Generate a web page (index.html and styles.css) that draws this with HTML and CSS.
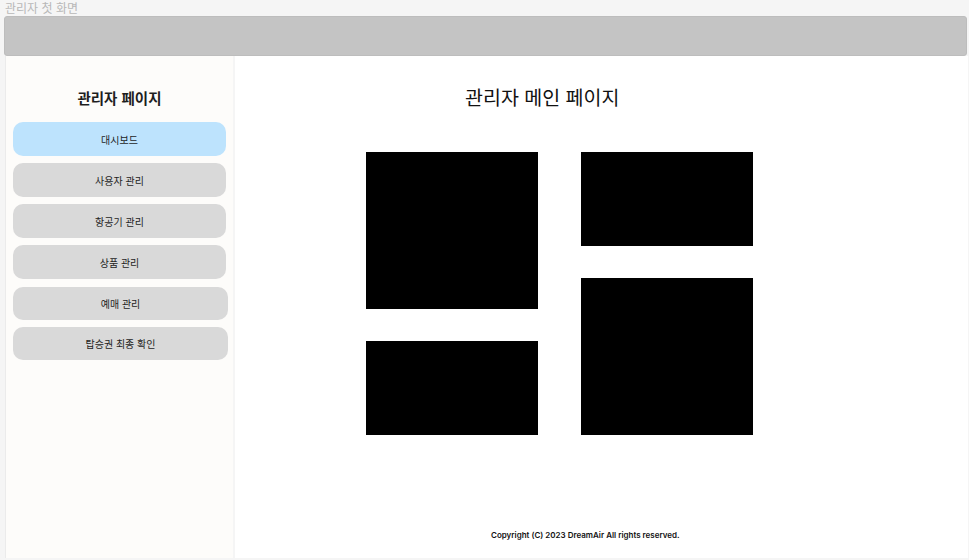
FILE: index.html
```html
<!DOCTYPE html>
<html lang="ko">
<head>
<meta charset="utf-8">
<title>관리자 첫 화면</title>
<link rel="stylesheet" href="styles.css">
</head>
<body>
<div class="caption">관리자 첫 화면</div>
<div class="topbar"></div>
<div class="layout">
  <aside class="sidebar">
    <h2 class="side-title">관리자 페이지</h2>
    <nav class="menu">
      <a class="menu-item active">대시보드</a>
      <a class="menu-item">사용자 관리</a>
      <a class="menu-item">항공기 관리</a>
      <a class="menu-item">상품 관리</a>
      <a class="menu-item wide">예매 관리</a>
      <a class="menu-item wide">탑승권 최종 확인</a>
    </nav>
  </aside>
  <main class="main">
    <h1 class="main-title">관리자 메인 페이지</h1>
    <div class="boxes">
      <div class="col">
        <div class="box tall"></div>
        <div class="box short"></div>
      </div>
      <div class="col">
        <div class="box short"></div>
        <div class="box tall"></div>
      </div>
    </div>
    <footer class="footer">Copyright (C) 2023 DreamAir All rights reserved.</footer>
  </main>
</div>
</body>
</html>
```
FILE: styles.css
```css
* { box-sizing: border-box; }
html, body { margin: 0; padding: 0; }
body {
  background: #f5f5f5;
  font-family: "Noto Sans CJK KR", "Noto Sans", sans-serif;
  width: 969px;
  height: 560px;
  overflow: hidden;
}
.caption {
  height: 16px;
  padding-left: 5px;
  font-size: 12px;
  line-height: 15px;
  color: #b8b8b8;
}
.topbar {
  height: 40px;
  margin: 0 2px 0 4px;
  background: #c4c4c4;
  border-radius: 3px;
  border: 1px solid #bdbdbd;
}
.layout {
  display: flex;
  height: 502px;
  margin-left: 5px;
  gap: 2px;
}
.sidebar {
  width: 228px;
  background: #fdfcfa;
  border-left: 1px solid #ebebeb;
  padding: 29px 7px 0 7px;
}
.side-title {
  margin: 0 0 11px 0;
  text-align: center;
  font-size: 14.5px;
  font-weight: 700;
  line-height: 26px;
  color: #1e1e1e;
}
.menu {
  display: flex;
  flex-direction: column;
  gap: 7px;
}
.menu-item {
  display: flex;
  align-items: center;
  justify-content: center;
  width: 213px;
  height: 34px;
  border-radius: 10px;
  background: #d9d9d9;
  font-size: 10px;
  color: #1e1e1e;
}
.menu-item.active { background: #bde3fd; }
.menu-item.wide { width: 215px; height: 33px; }
.menu-item.wide:first-of-type { margin-top: 0; }
.menu-item:nth-child(5) { margin-top: 1px; }
.main {
  flex: 1;
  background: #ffffff;
  margin-right: 1px;
  display: flex;
  flex-direction: column;
  padding-top: 27px;
}
.main-title {
  margin: 0 0 0 230px;
  font-size: 19.5px;
  font-weight: 400;
  line-height: 28px;
  color: #111;
}
.boxes {
  display: flex;
  gap: 43px;
  margin: 41px 0 0 131px;
}
.col {
  display: flex;
  flex-direction: column;
  gap: 32px;
}
.box {
  width: 172px;
  background: #000;
}
.box.tall { height: 157px; }
.box.short { height: 94px; }
.footer {
  margin: auto 0 0 256px;
  padding-bottom: 17px;
  font-family: "Inter", "Liberation Sans", sans-serif;
  font-size: 8px;
  font-weight: 600;
  line-height: 12px;
  color: #111;
}
```
